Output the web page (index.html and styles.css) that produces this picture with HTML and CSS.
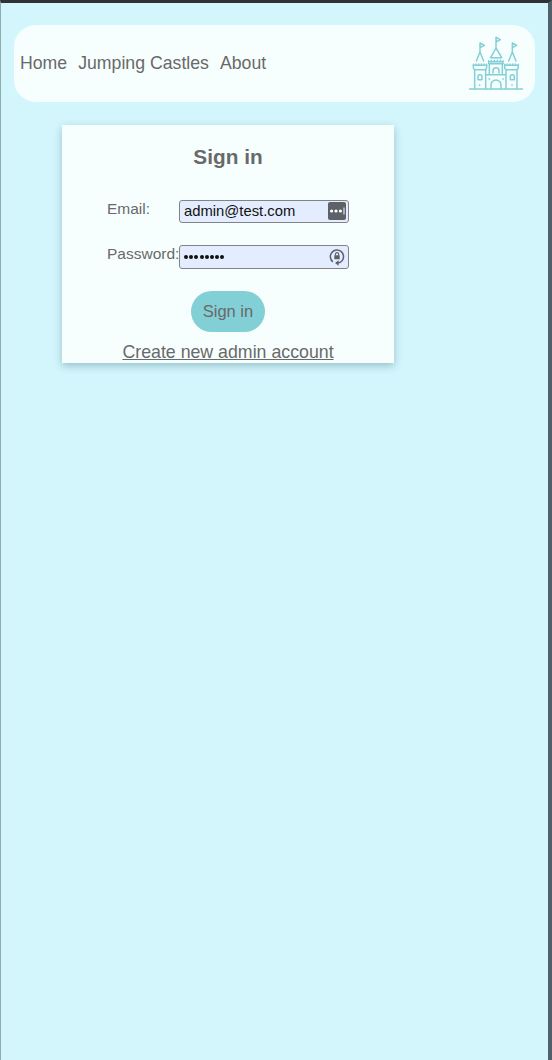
FILE: index.html
```html
<!DOCTYPE html>
<html lang="en">
<head>
<meta charset="utf-8">
<title>Sign in</title>
<link rel="stylesheet" href="styles.css">
</head>
<body>
<div class="page">
  <header class="header">
    <nav class="nav">
      <a class="nav-link">Home</a>
      <a class="nav-link">Jumping Castles</a>
      <a class="nav-link">About</a>
    </nav>
    <svg class="castle" viewBox="27 33 162 162">
      <path d="M29 192H187M44 192V136M77 192V136M138 192V136M171 192V136M40 118V126Q40 134 46 134H74Q80 134 80 126V118M134 118V126Q134 134 140 134H168Q175 134 175 126V118M40 121H80M134 121H175M48 117V121M56 117V121M64 117V121M72 117V121M142 117V121M150 117V121M158 117V121M166 117V121M77 149H138M88 149V118M127 149V118M86 107V116H129V107M86 110H129M94 106V111M103 106V111M112 106V111M121 106V111M92 98H125L108 69ZM108 69V37L121 44L108 51M49 108L60 81L71 108M60 81V54L73 61L60 68M146 108L157 81L168 108M157 81V54L170 61L157 68M99 144V137A9 9 0 0 1 117 137V144M93 192V180A15 15 0 0 1 123 180V192M54 164V155A6 6 0 0 1 66 155V164ZM151 164V155A6 6 0 0 1 163 155V164ZM59 179V181M156 179V181M87 162H89M128 162H130"/>
    </svg>
  </header>
  <main class="card">
    <h1 class="title">Sign in</h1>
    <form class="form">
      <div class="row">
        <label class="label">Email:</label>
        <div class="field">
          <span>admin@test.com</span>
          <svg class="key" viewBox="0 0 18 18"><rect class="solid" width="18" height="18" rx="2"/><circle class="dot" cx="3.6" cy="9" r="1.6"/><circle class="dot" cx="8" cy="9" r="1.6"/><circle class="dot" cx="12.4" cy="9" r="1.6"/><path class="cursor" d="M16 5.5V12.5"/></svg>
        </div>
      </div>
      <div class="row">
        <label class="label">Password:</label>
        <div class="field">
          <span class="dots"><i></i><i></i><i></i><i></i><i></i><i></i><i></i><i></i></span>
          <svg class="key" viewBox="0 0 18 18"><path class="ring" d="M4.6 13.6A6.6 6.6 0 1 1 14.2 12.6Q12.4 14.8 9.6 15M4.8 13.9L3 12"/><path class="solid" d="M10.6 12.2V17.8L7 15ZM6.3 7.3H11.7V11.2H6.3Z"/><path class="ring thin" d="M7.4 7.6V6.2A1.6 1.6 0 0 1 10.6 6.2V7.6"/></svg>
        </div>
      </div>
      <button class="submit" type="button">Sign in</button>
    </form>
    <a class="create">Create new admin account</a>
  </main>
</div>
</body>
</html>
```
FILE: styles.css
```css
* { box-sizing: border-box; }
body {
  margin: 0;
  font-family: "Liberation Sans", Arial, sans-serif;
  color: #696969;
}
.page {
  height: 1060px;
  padding: 22px 13px 0 13px;
  background: #d3f6fd;
  border-top: 3px solid #303336;
  border-left: 1px solid #91aab2;
  border-right: 4px solid #526169;
}
.header {
  display: flex;
  align-items: center;
  justify-content: space-between;
  width: 521px;
  height: 77px;
  padding: 0 12px 2px 6px;
  border-radius: 22px;
  background: #f7fffe;
}
.nav { display: flex; gap: 11px; }
.nav-link { font-size: 17.7px; line-height: 20px; white-space: nowrap; }
.castle {
  width: 54px;
  height: 54px;
  fill: none;
  stroke: #82d0d5;
  stroke-width: 4.5;
  stroke-linecap: round;
  stroke-linejoin: round;
}
.card {
  display: flex;
  flex-direction: column;
  align-items: center;
  width: 332px;
  height: 238px;
  margin: 22.5px 0 0 48px;
  background: #f7fffe;
  box-shadow: 0 3px 8px rgba(0, 60, 75, 0.28);
}
.title {
  margin: 19px 0 0;
  font-size: 20.8px;
  line-height: 25px;
}
.form {
  display: flex;
  flex-direction: column;
  align-items: center;
  gap: 22px;
  margin-top: 31px;
}
.row { display: flex; width: 242px; height: 23.5px; }
.label { width: 72px; font-size: 15.5px; line-height: 17.5px; white-space: nowrap; }
.field {
  display: flex;
  align-items: center;
  justify-content: space-between;
  width: 170px;
  height: 23.5px;
  padding: 0 2px 0 4px;
  border: 1px solid #818387;
  border-radius: 3px;
  background: #e4edff;
  color: #111;
  font-size: 14.8px;
}
.key { width: 18px; height: 18px; }
.solid { fill: #5d6168; }
.dot { fill: #fff; }
.cursor { stroke: #fff; stroke-width: 1; }
.ring { fill: none; stroke: #5d6168; stroke-width: 1.5; }
.thin { stroke-width: 1.1; }
.dots { display: flex; gap: 1.2px; }
.dots i { width: 4px; height: 4px; border-radius: 50%; background: #111; }
.submit {
  width: 73.5px;
  height: 41px;
  padding: 0;
  border: 0;
  border-radius: 20.5px;
  background: #82d0d5;
  color: #696969;
  font: 16.5px "Liberation Sans", Arial, sans-serif;
}
.create {
  margin-top: 10px;
  font-size: 17.75px;
  line-height: 20px;
  white-space: nowrap;
  text-decoration: underline;
}
```
